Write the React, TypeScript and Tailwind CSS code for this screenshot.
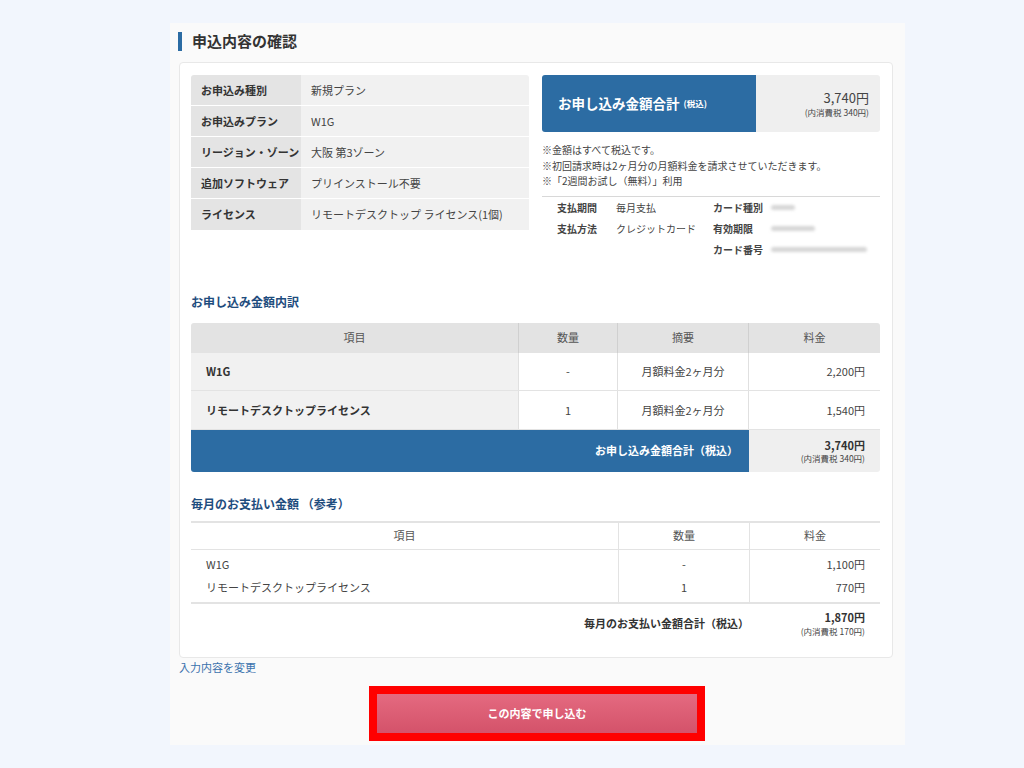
import React from "react";

const font = { fontFamily: '"Noto Sans CJK JP", "Noto Sans", sans-serif' };

function InfoRow({ label, value, last }: { label: string; value: string; last?: boolean }) {
  return (
    <div className={`flex h-[31px] items-center ${last ? "" : "border-b border-white"}`}>
      <div className="flex h-full w-[110px] items-center bg-[#e4e4e4] pl-[10px] text-[11px] font-bold text-[#333]">{label}</div>
      <div className="flex h-full flex-1 items-center bg-[#f1f1f1] pl-[10px] text-[11px] text-[#444]">{value}</div>
    </div>
  );
}

function Blur({ w }: { w: number }) {
  return <span className="inline-block h-[5px] rounded bg-[#d6d6d6] blur-[1.5px]" style={{ width: w }} />;
}

export default function App() {
  return (
    <div className="min-h-[768px] w-full bg-[#f2f6fd] pt-[23px]" style={font}>
      <div className="ml-[170px] w-[735px] bg-[#fafafa] pb-[4px] pl-[9px] pr-[12px] pt-[8px]">
        <div className="flex h-[20px] items-center">
          <div className="ml-[-1px] h-[19px] w-[4px] bg-[#2c6ca3]" />
          <h1 className="ml-[10px] text-[15px] font-bold text-[#333]">申込内容の確認</h1>
        </div>

        <div className="mt-[11px] rounded-[4px] border border-[#e8e8e8] bg-white pb-[20px] pl-[11px] pr-[12px] pt-[12px]">
          <div className="grid grid-cols-2 gap-[13px]">
            <div className="overflow-hidden rounded-[3px]">
              <InfoRow label="お申込み種別" value="新規プラン" />
              <InfoRow label="お申込みプラン" value="W1G" />
              <InfoRow label="リージョン・ゾーン" value="大阪 第3ゾーン" />
              <InfoRow label="追加ソフトウェア" value="プリインストール不要" />
              <InfoRow label="ライセンス" value="リモートデスクトップ ライセンス(1個)" last />
            </div>
            <div>
              <div className="flex h-[57px] overflow-hidden rounded-[3px]">
                <div className="flex w-[214px] items-center bg-[#2c6ca3] pl-[16px] text-white">
                  <span className="text-[13.5px] font-bold">お申し込み金額合計</span>
                  <span className="ml-[4px] text-[8.5px] font-bold">(税込)</span>
                </div>
                <div className="flex flex-1 flex-col items-end justify-center bg-[#efefef] pr-[11px] text-[#444]">
                  <span className="text-[13px] leading-[17px]">3,740円</span>
                  <span className="text-[8.5px] leading-[12px]">(内消費税 340円)</span>
                </div>
              </div>
              <div className="mt-[10px] text-[10px] leading-[15.5px] text-[#444]">
                <p>※金額はすべて税込です。</p>
                <p>※初回請求時は2ヶ月分の月額料金を請求させていただきます。</p>
                <p>※「2週間お試し（無料）」利用</p>
              </div>
              <div className="mt-[7px] border-t border-[#d8d8d8] text-[10px] text-[#444]">
                <div className="grid grid-cols-[59px_97px_58px_1fr] items-center pl-[15px] leading-[21px]">
                  <span className="font-bold">支払期間</span>
                  <span>毎月支払</span>
                  <span className="whitespace-nowrap font-bold">カード種別</span>
                  <span className="flex items-center"><Blur w={24} /></span>
                  <span className="font-bold">支払方法</span>
                  <span>クレジットカード</span>
                  <span className="whitespace-nowrap font-bold">有効期限</span>
                  <span className="flex items-center"><Blur w={44} /></span>
                  <span />
                  <span />
                  <span className="whitespace-nowrap font-bold">カード番号</span>
                  <span className="flex items-center"><Blur w={96} /></span>
                </div>
              </div>
            </div>
          </div>

          <h2 className="mt-[33px] text-[12px] font-bold text-[#1f4d7e]">お申し込み金額内訳</h2>
          <div className="mt-[12px] overflow-hidden rounded-[3px] text-[11px] text-[#444]">
            <div className="grid h-[30px] grid-cols-[328px_99px_131px_1fr] bg-[#e3e3e3] text-[#555]">
              <div className="flex items-center justify-center border-r border-[#d0d0d0]">項目</div>
              <div className="flex items-center justify-center border-r border-[#d0d0d0]">数量</div>
              <div className="flex items-center justify-center border-r border-[#d0d0d0]">摘要</div>
              <div className="flex items-center justify-center">料金</div>
            </div>
            {[
              ["W1G", "-", "月額料金2ヶ月分", "2,200円"],
              ["リモートデスクトップライセンス", "1", "月額料金2ヶ月分", "1,540円"],
            ].map((r, i) => (
              <div key={i} className="grid h-[38.5px] grid-cols-[328px_99px_131px_1fr] border-b border-[#e3e3e3]">
                <div className="flex items-center border-r border-[#e0e0e0] bg-[#f1f1f1] pl-[15px] font-bold text-[#333]">{r[0]}</div>
                <div className="flex items-center justify-center border-r border-[#e0e0e0]">{r[1]}</div>
                <div className="flex items-center justify-center border-r border-[#e0e0e0]">{r[2]}</div>
                <div className="flex items-center justify-end pr-[15px]">{r[3]}</div>
              </div>
            ))}
            <div className="grid h-[42px] grid-cols-[558px_1fr]">
              <div className="flex items-center justify-end bg-[#2c6ca3] pr-[11px] font-bold text-white">お申し込み金額合計（税込）</div>
              <div className="flex flex-col items-end justify-center bg-[#efefef] pr-[15px]">
                <span className="text-[11px] font-bold leading-[14px] text-[#333]">3,740円</span>
                <span className="text-[8.5px] leading-[12px]">(内消費税 340円)</span>
              </div>
            </div>
          </div>

          <h2 className="mt-[23px] text-[12px] font-bold text-[#1f4d7e]">毎月のお支払い金額 （参考）</h2>
          <div className="mt-[8px] text-[11px] text-[#444]">
            <div className="grid h-[29px] grid-cols-[428px_131px_1fr] border-b border-t-2 border-[#e3e3e3] text-[#555]">
              <div className="flex items-center justify-center border-r border-[#e3e3e3]">項目</div>
              <div className="flex items-center justify-center border-r border-[#e3e3e3]">数量</div>
              <div className="flex items-center justify-center">料金</div>
            </div>
            <div className="grid grid-cols-[428px_131px_1fr] border-b-2 border-[#e3e3e3]">
              <div className="border-r border-[#e3e3e3] py-[3px] pl-[15px] leading-[23px]">
                <div>W1G</div>
                <div>リモートデスクトップライセンス</div>
              </div>
              <div className="border-r border-[#e3e3e3] py-[3px] text-center leading-[23px]">
                <div>-</div>
                <div>1</div>
              </div>
              <div className="py-[3px] pr-[15px] text-right leading-[23px]">
                <div>1,100円</div>
                <div>770円</div>
              </div>
            </div>
            <div className="grid grid-cols-[559px_1fr] pt-[6px]">
              <div className="flex items-center justify-end pr-[1px] font-bold text-[#333]">毎月のお支払い金額合計（税込）</div>
              <div className="flex flex-col items-end pr-[15px]">
                <span className="text-[11px] font-bold leading-[15px] text-[#333]">1,870円</span>
                <span className="text-[8.5px] leading-[12px]">(内消費税 170円)</span>
              </div>
            </div>
          </div>
        </div>

        <a className="mt-[1px] block text-[11px] leading-[16px] text-[#3a72ad]">入力内容を変更</a>

        <div className="mt-[11px] flex justify-center pl-[2px]">
          <div className="border-[8px] border-[#ff0000]">
            <button className="flex h-[39px] w-[320px] items-center justify-center bg-gradient-to-b from-[#e46a80] to-[#d4526a] text-[11px] font-bold text-white">
              この内容で申し込む
            </button>
          </div>
        </div>
      </div>
    </div>
  );
}
